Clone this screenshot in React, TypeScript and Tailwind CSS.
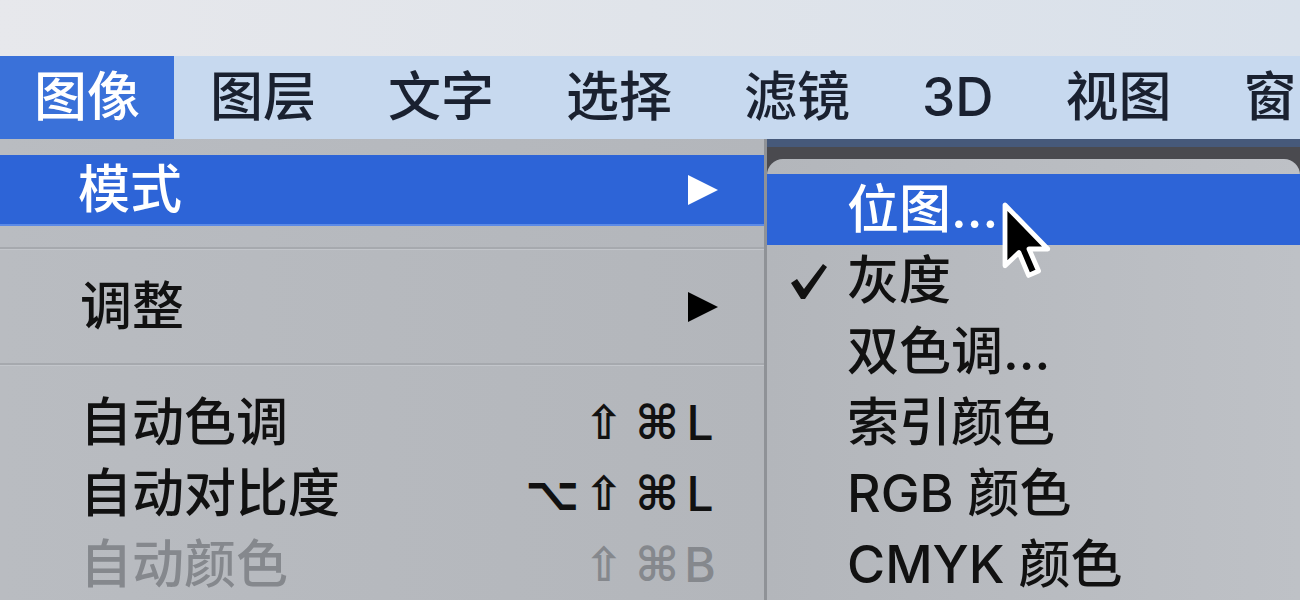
import React from "react";

const CJK = { fontFamily: '"Inter", "Noto Sans CJK SC", sans-serif' };
const SYM = { fontFamily: '"DejaVu Sans", "Noto Sans CJK SC", sans-serif' };

const barItems = ["图像", "图层", "文字", "选择", "滤镜", "3D", "视图", "窗口"];

function Triangle({ color }: { color: string }) {
  return (
    <svg width="32" height="32" viewBox="0 0 32 32">
      <polygon points="1,1 31,16 1,31" fill={color} />
    </svg>
  );
}

// modifier glyphs in DejaVu, the key letter in the menu font
function Keys({ keys, dim }: { keys: string[]; dim?: boolean }) {
  const widths: Record<string, string> = { "⌥": "w-[52px]", "⇧": "w-[54px]", "⌘": "w-[52px]" };
  return (
    <div className={`flex items-center leading-none ${dim ? "text-[#85888d]" : "text-[#111]"}`}>
      {keys.map((k, i) =>
        widths[k] ? (
          <span key={i} className={`${widths[k]} text-center text-[47px] font-bold`} style={SYM}>
            {k}
          </span>
        ) : (
          <span key={i} className="w-[34px] text-center text-[48px] font-medium">
            {k}
          </span>
        )
      )}
    </div>
  );
}

function Separator() {
  return (
    <div className="h-[45px] flex items-center">
      <div className="w-full h-[3px] bg-[#a6a9ae] border-b border-[#c3c6cb]" />
    </div>
  );
}

function Cursor() {
  return (
    <svg className="absolute left-[999px] top-[201px]" width="52" height="80" viewBox="0 0 13 20">
      <path
        d="M1.5 1 L1.5 16.2 L5 12.9 L7.4 18.6 L9.9 17.5 L7.5 12 L12.2 12 Z"
        fill="#000"
        stroke="#fff"
        strokeWidth="1.2"
        strokeLinejoin="round"
      />
    </svg>
  );
}

export default function App() {
  return (
    <div className="relative w-[1300px] h-[600px] overflow-hidden bg-[#e3e6eb] font-medium" style={CJK}>
      {/* window top */}
      <div className="h-[56px] bg-gradient-to-r from-[#e7e8ec] via-[#e0e4ea] to-[#d9e1eb]" />

      {/* menu bar */}
      <div className="h-[83px] flex bg-[#c7d9ef] text-[53px] text-[#1a2130] leading-none whitespace-nowrap">
        {barItems.map((t, i) => (
          <div
            key={t}
            className={`flex items-center ${i === 0 ? "bg-[#3a71d9] text-white w-[175px] px-[34px]" : "px-[36px]"}`}
          >
            {t}
          </div>
        ))}
      </div>

      <div className="flex h-[461px]">
        {/* main menu */}
        <div className="w-[767px] shrink-0 bg-gradient-to-r from-[#b9bcc1] to-[#b3b6bb] pt-[16px] text-[52px] text-[#111] border-r-[3px] border-[#8f9297]">
          <div className="h-[71px] flex items-center justify-between pl-[78px] pr-[45px] bg-[#2d64d7] text-white border-b-2 border-[#5c8ae6]">
            <span>模式</span>
            <Triangle color="#fff" />
          </div>
          <Separator />
          <div className="h-[71px] flex items-center justify-between pl-[80px] pr-[45px]">
            <span>调整</span>
            <Triangle color="#000" />
          </div>
          <Separator />
          <div className="h-[71px] flex items-center justify-between pl-[80px] pr-[47px]">
            <span>自动色调</span>
            <Keys keys={["⇧", "⌘", "L"]} />
          </div>
          <div className="h-[71px] flex items-center justify-between pl-[80px] pr-[47px]">
            <span>自动对比度</span>
            <Keys keys={["⌥", "⇧", "⌘", "L"]} />
          </div>
          <div className="h-[71px] flex items-center justify-between pl-[80px] pr-[47px] text-[#85888d]">
            <span>自动颜色</span>
            <Keys keys={["⇧", "⌘", "B"]} dim />
          </div>
        </div>

        {/* submenu column */}
        <div className="flex-1 flex flex-col">
          <div className="h-[11px] bg-[#46597a]" />
          <div className="flex-1 flex flex-col bg-[#4a4a4f] pt-[12px]">
            <div className="flex-1 rounded-t-[16px] bg-gradient-to-r from-[#b3b6bb] to-[#bec1c6] pt-[15px] text-[52px] text-[#111]">
              <div className="h-[71px] flex items-center pl-[80px] bg-[#2d64d7] text-white">位图...</div>
              <div className="h-[71px] flex items-center pl-[22px]">
                <svg width="40" height="40" viewBox="0 0 40 40" className="mr-[18px]">
                  <path d="M2 22 L8 18 L15 28 L34 3 L38 6 L16 38 L12 38 Z" fill="#111" />
                </svg>
                <span>灰度</span>
              </div>
              <div className="h-[71px] flex items-center pl-[80px]">双色调...</div>
              <div className="h-[71px] flex items-center pl-[80px]">索引颜色</div>
              <div className="h-[71px] flex items-center pl-[80px]">RGB 颜色</div>
              <div className="h-[71px] flex items-center pl-[80px]">CMYK 颜色</div>
            </div>
          </div>
        </div>
      </div>

      <Cursor />
    </div>
  );
}
